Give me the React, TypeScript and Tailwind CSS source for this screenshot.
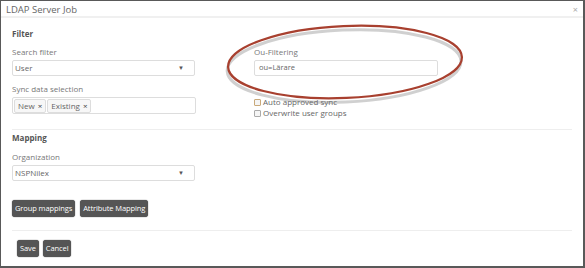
import React from "react";

const Caret = () => (
  <span className="text-[6px] text-[#555] leading-none">▼</span>
);

const Tag = ({ label }: { label: string }) => (
  <span className="flex items-center gap-[3px] h-[14px] px-[3px] border border-[#ddd] rounded-[2px] bg-[#f7f7f7] text-[8px] text-[#666]">
    {label}
    <span className="text-[8px] text-[#444] leading-none">×</span>
  </span>
);

const Btn = ({ label }: { label: string }) => (
  <button className="h-[17px] px-[3px] rounded-[3px] bg-[#555] text-white text-[7.5px] leading-none tracking-[-0.1px] shadow-[0_0_1px_#222]">
    {label}
  </button>
);

export default function App() {
  return (
    <div
      className="relative w-[585px] h-[268px] bg-white border-l border-t border-r-2 border-b-2 border-[#595959] overflow-hidden"
      style={{ fontFamily: '"Open Sans", "Noto Sans", sans-serif' }}
    >
      {/* Header */}
      <div className="flex items-center justify-between h-[17px] pl-[5px] pr-[5px] border-b-2 border-[#f0f0f0]">
        <span className="text-[9.5px] text-[#666] pt-[3px]">LDAP Server Job</span>
        <span className="text-[9px] text-[#aaa] pt-[3px]">×</span>
      </div>

      {/* Filter */}
      <div className="px-[11px] pt-[11px]">
        <div className="text-[8px] font-bold text-[#555] h-[10px] leading-[10px]">Filter</div>
        <div className="flex gap-[59px] mt-[3px]">
          <div className="w-[183px] flex flex-col">
            <div className="text-[8px] text-[#777] leading-[10px] mt-[5px]">Search filter</div>
            <div className="mt-[3px] h-[16px] border border-[#ddd] rounded-[2px] flex items-center justify-between pl-[2px] pr-[10px] text-[8px] text-[#666]">
              User
              <Caret />
            </div>
            <div className="text-[8px] text-[#777] leading-[10px] mt-[8px]">Sync data selection</div>
            <div className="mt-[3px] h-[17px] w-[184px] border border-[#ddd] rounded-[2px] flex items-center gap-[1px] pl-[1px]">
              <Tag label="New" />
              <Tag label="Existing" />
            </div>
          </div>
          <div className="w-[184px] flex flex-col">
            <div className="text-[8px] text-[#777] leading-[10px] mt-[5px]">Ou-Filtering</div>
            <div className="mt-[3px] h-[16px] border border-[#ddd] rounded-[2px] flex items-center pl-[4px] text-[7.5px] text-[#666]">
              ou=Lärare
            </div>
            <div className="mt-[21px] flex items-center gap-[2px] text-[8px] text-[#666] leading-[10px] h-[10px]">
              <span className="w-[7px] h-[7px] border border-[#c9a97a] rounded-[1px] bg-[#f5f5f5]" />
              Auto approved sync
            </div>
            <div className="mt-[1px] flex items-center gap-[2px] text-[8px] text-[#666] leading-[10px] h-[10px]">
              <span className="w-[7px] h-[7px] border border-[#aaa] rounded-[1px] bg-[#f5f5f5]" />
              Overwrite user groups
            </div>
          </div>
        </div>
        <div className="mt-[11px] border-t border-[#eee] w-[560px]" />

        {/* Mapping */}
        <div className="text-[8px] font-bold text-[#555] h-[10px] leading-[10px] mt-[3px]">Mapping</div>
        <div className="text-[8px] text-[#777] leading-[10px] mt-[9px]">Organization</div>
        <div className="mt-[3px] w-[183px] h-[16px] border border-[#ddd] rounded-[2px] flex items-center justify-between pl-[2px] pr-[10px] text-[8px] text-[#666]">
          NSPNilex
          <Caret />
        </div>
        <div className="flex gap-[5px] mt-[19px]">
          <Btn label="Group mappings" />
          <Btn label="Attribute Mapping" />
        </div>
        <div className="mt-[13px] border-t border-[#eee] w-[560px]" />
        <div className="flex gap-[4px] mt-[9px] pl-[5px]">
          <Btn label="Save" />
          <Btn label="Cancel" />
        </div>
      </div>

      {/* Red hand-drawn ellipse annotation */}
      <svg className="absolute left-[215px] top-[15px]" width="265" height="95" viewBox="0 0 265 95">
        <ellipse cx="129" cy="48" rx="117" ry="36" fill="none" stroke="#777" strokeOpacity="0.35" strokeWidth="3" transform="rotate(-2.5 129 48) translate(-1 2)" />
        <ellipse cx="129" cy="46" rx="117" ry="36" fill="none" stroke="#a8402f" strokeWidth="2.2" transform="rotate(-2.5 129 46)" />
      </svg>
    </div>
  );
}
